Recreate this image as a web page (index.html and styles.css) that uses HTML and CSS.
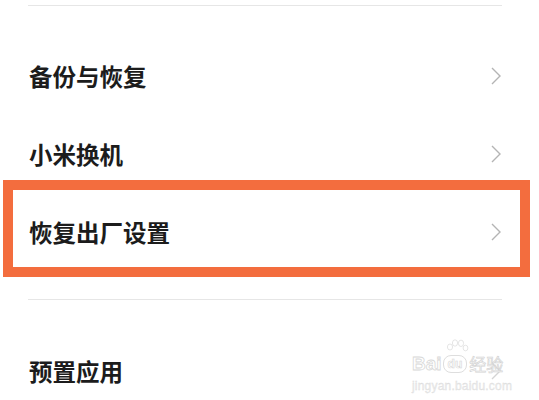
FILE: index.html
```html
<!DOCTYPE html>
<html lang="zh-CN">
<head>
<meta charset="utf-8">
<link rel="stylesheet" href="styles.css">
</head>
<body>
<div class="page">
  <div class="divider top"></div>
  <div class="group">
    <div class="row"><span class="label">备份与恢复</span><svg class="chev" viewBox="0 0 10 18"><path d="M1 1 L9 9 L1 17" /></svg></div>
    <div class="row"><span class="label">小米换机</span><svg class="chev" viewBox="0 0 10 18"><path d="M1 1 L9 9 L1 17" /></svg></div>
    <div class="row"><span class="label">恢复出厂设置</span><svg class="chev" viewBox="0 0 10 18"><path d="M1 1 L9 9 L1 17" /></svg></div>
  </div>
  <div class="divider mid"></div>
  <div class="group">
    <div class="row"><span class="label">预置应用</span><svg class="chev faint" viewBox="0 0 10 18"><path d="M1 1 L9 9 L1 17" /></svg></div>
  </div>
  <div class="highlight"></div>
  <div class="watermark">
    <svg class="paw" viewBox="0 0 24 16"><ellipse cx="5" cy="8" rx="2.6" ry="3"/><ellipse cx="10" cy="4" rx="2.6" ry="3.2"/><ellipse cx="16" cy="4.3" rx="2.6" ry="3.2"/><ellipse cx="20.5" cy="9" rx="2.4" ry="2.8"/></svg>
    <div class="wm-line"><span class="wm-bai">Bai</span><span class="wm-du">du</span><span class="wm-jy">经验</span></div>
    <div class="wm-url">jingyan.baidu.com</div>
  </div>
</div>
</body>
</html>
```
FILE: styles.css
```css
html, body {
  margin: 0;
  padding: 0;
  background: #ffffff;
}
.page {
  position: relative;
  width: 539px;
  height: 400px;
  overflow: hidden;
  font-family: "Noto Sans CJK SC", "Noto Sans", sans-serif;
}
.divider {
  height: 1px;
  background: #e6e6e6;
  margin: 0 37px 0 28px;
}
.divider.top {
  margin-top: 5px;
}
.group {
  display: flex;
  flex-direction: column;
}
.divider.top + .group {
  padding-top: 31px;
  padding-bottom: 28px;
}
.divider.mid + .group {
  padding-top: 32px;
}
.row {
  height: 78px;
  display: flex;
  align-items: center;
  justify-content: space-between;
  padding: 0 38px 0 29px;
}
.label {
  font-size: 23.5px;
  font-weight: 700;
  color: #1c1c1c;
}
.chev {
  width: 10px;
  height: 18px;
  fill: none;
  stroke: #b4b4b4;
  stroke-width: 1.4;
}
.chev.faint {
  stroke: #d4d4d4;
}
.highlight {
  position: absolute;
  left: 3px;
  top: 180px;
  width: 507px;
  height: 77px;
  border: 10px solid #f36d3e;
}
.watermark {
  position: absolute;
  left: 412px;
  top: 339px;
  width: 100px;
  font-family: "Liberation Sans", Arial, sans-serif;
}
.paw {
  position: absolute;
  left: 33px;
  top: 0;
  width: 24px;
  height: 16px;
  fill: rgba(255,255,255,0.8);
  stroke: #dedede;
  stroke-width: 0.8;
}
.wm-line {
  display: flex;
  align-items: center;
  margin-top: 16px;
  height: 18px;
  line-height: 18px;
}
.wm-bai {
  font-size: 19px;
  font-weight: bold;
  color: rgba(255,255,255,0.85);
  -webkit-text-stroke: 0.8px #d8d8d8;
}
.wm-du {
  font-size: 12px;
  line-height: 14px;
  font-weight: bold;
  color: rgba(255,255,255,0.85);
  -webkit-text-stroke: 0.6px #d6d6d6;
  border: 1px solid #dedede;
  border-radius: 8px;
  padding: 1px 4px;
  margin: 0 2px 0 1px;
}
.wm-jy {
  font-family: "Noto Sans CJK SC", sans-serif;
  font-size: 17px;
  color: rgba(255,255,255,0.85);
  -webkit-text-stroke: 0.7px #d4d4d4;
}
.wm-url {
  margin-top: 7px;
  font-size: 12px;
  line-height: 12px;
  letter-spacing: 0.2px;
  color: #ededed;
  -webkit-text-stroke: 0.3px #dadada;
}
```
